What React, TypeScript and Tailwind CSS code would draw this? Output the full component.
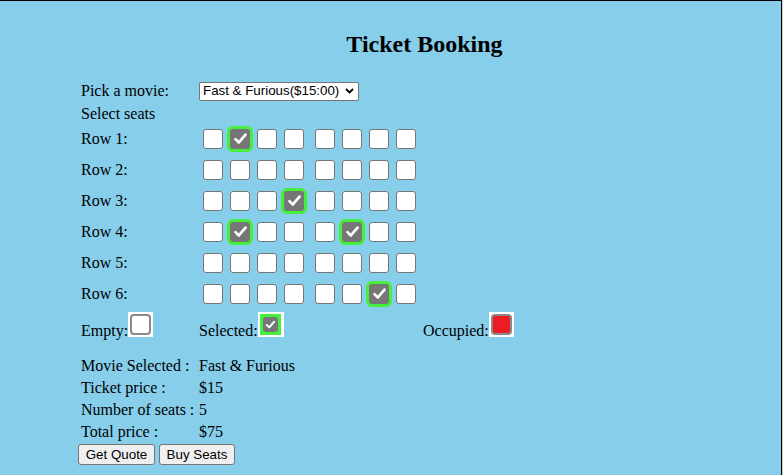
import React from 'react';

const rows: number[][] = [
    [0, 1, 0, 0, 0, 0, 0, 0],
    [0, 0, 0, 0, 0, 0, 0, 0],
    [0, 0, 0, 1, 0, 0, 0, 0],
    [0, 1, 0, 0, 0, 1, 0, 0],
    [0, 0, 0, 0, 0, 0, 0, 0],
    [0, 0, 0, 0, 0, 0, 1, 0],
];

const info = [
    { label: 'Movie Selected :', value: 'Fast & Furious' },
    { label: 'Ticket price :', value: '$15' },
    { label: 'Number of seats :', value: '5' },
    { label: 'Total price :', value: '$75' },
];

const Check = ({ size = 13 }: { size?: number }) => (
    <svg width={size} height={size} viewBox="0 0 14 14" fill="none">
        <path d="M2.3 7.6 L5.5 10.7 L11.7 3.4" stroke="white" strokeWidth="2.5" strokeLinecap="round" strokeLinejoin="round" />
    </svg>
);

const Seat = ({ checked }: { checked: boolean }) =>
    checked ? (
        <div className="w-[20px] h-[20px] rounded-[3px] bg-[#767676] flex items-center justify-center shadow-[0_0_0_3px_#46ef3e]">
            <Check size={15} />
        </div>
    ) : (
        <div className="w-[20px] h-[20px] rounded-[3px] bg-white border border-[#767676]"></div>
    );

const App = () => {
    return (
        <div className="w-[783px] h-[475px] overflow-hidden bg-[#cfcfcf] font-['Liberation_Serif',serif] text-black text-[16px]">
            <div className="w-[782px] h-full bg-[#87ceeb] border-t border-r border-black">
                <h2 className="ml-[81px] mr-[13px] mt-[30px] text-center text-[24px] font-bold leading-[27px]">
                    Ticket Booking
                </h2>

                <div className="pl-[81px]">
                    <div className="flex items-center h-[22px] mt-[22px]">
                        <span className="w-[118px] leading-[22px]">Pick a movie:</span>
                        <div className="w-[160px] h-[19px] bg-white border border-[#767676] rounded-[2px] flex items-center justify-between pl-[3px] pr-[4px] font-['Liberation_Sans',Arial,sans-serif] text-[13.33px] leading-none">
                            <span>Fast &amp; Furious($15:00)</span>
                            <svg width="9" height="6" viewBox="0 0 9 6" fill="none">
                                <path d="M1 1 L4.5 4.5 L8 1" stroke="black" strokeWidth="1.8" />
                            </svg>
                        </div>
                    </div>
                    <div className="h-[21px] leading-[23px]">Select seats</div>

                    {rows.map((row, r) => (
                        <div key={r} className="flex items-center h-[31px]">
                            <span className="w-[122px] leading-[22px]">Row {r + 1}:</span>
                            <div className="flex gap-[7px]">
                                {row.slice(0, 4).map((s, i) => (
                                    <Seat key={i} checked={s === 1} />
                                ))}
                            </div>
                            <div className="flex gap-[7px] ml-[11.3px]">
                                {row.slice(4).map((s, i) => (
                                    <Seat key={i} checked={s === 1} />
                                ))}
                            </div>
                        </div>
                    ))}

                    <div className="flex items-end mt-[3px] h-[25px]">
                        <div className="flex items-end w-[118px]">
                            <span className="leading-[18px] mb-[-3px]">Empty:</span>
                            <div className="w-[25px] h-[25px] bg-white flex items-center justify-center">
                                <div className="w-[21px] h-[21px] rounded-[4px] border-2 border-[#8a8a8a] bg-white"></div>
                            </div>
                        </div>
                        <div className="flex items-end w-[224px]">
                            <span className="leading-[18px] mb-[-3px]">Selected:</span>
                            <div className="w-[26px] h-[25px] bg-white pl-[2px] pt-[2px]">
                                <div className="w-[21px] h-[21px] bg-[#46ef3e] flex items-center justify-center">
                                    <div className="w-[15px] h-[15px] rounded-[3px] bg-[#767676] flex items-center justify-center">
                                        <Check size={11} />
                                    </div>
                                </div>
                            </div>
                        </div>
                        <div className="flex items-end">
                            <span className="leading-[18px] mb-[-3px]">Occupied:</span>
                            <div className="w-[25px] h-[25px] bg-white flex items-center justify-center">
                                <div className="w-[21px] h-[21px] rounded-[4px] border-2 border-[#8a8a8a] bg-[#ed1c24]"></div>
                            </div>
                        </div>
                    </div>

                    <div className="mt-[18px]">
                        {info.map((item, i) => (
                            <div key={i} className="flex h-[22px] leading-[22px]">
                                <span className="w-[118px]">{item.label}</span>
                                <span>{item.value}</span>
                            </div>
                        ))}
                    </div>
                </div>

                <div className="flex gap-[4px] ml-[78px] mt-[1px] font-['Liberation_Sans',Arial,sans-serif] text-[13.33px]">
                    <button className="h-[21px] w-[77px] bg-[#efefef] border border-[#767676] rounded-[3px] leading-none">
                        Get Quote
                    </button>
                    <button className="h-[21px] w-[76px] bg-[#efefef] border border-[#767676] rounded-[3px] leading-none">
                        Buy Seats
                    </button>
                </div>
            </div>
        </div>
    );
};

export default App;
